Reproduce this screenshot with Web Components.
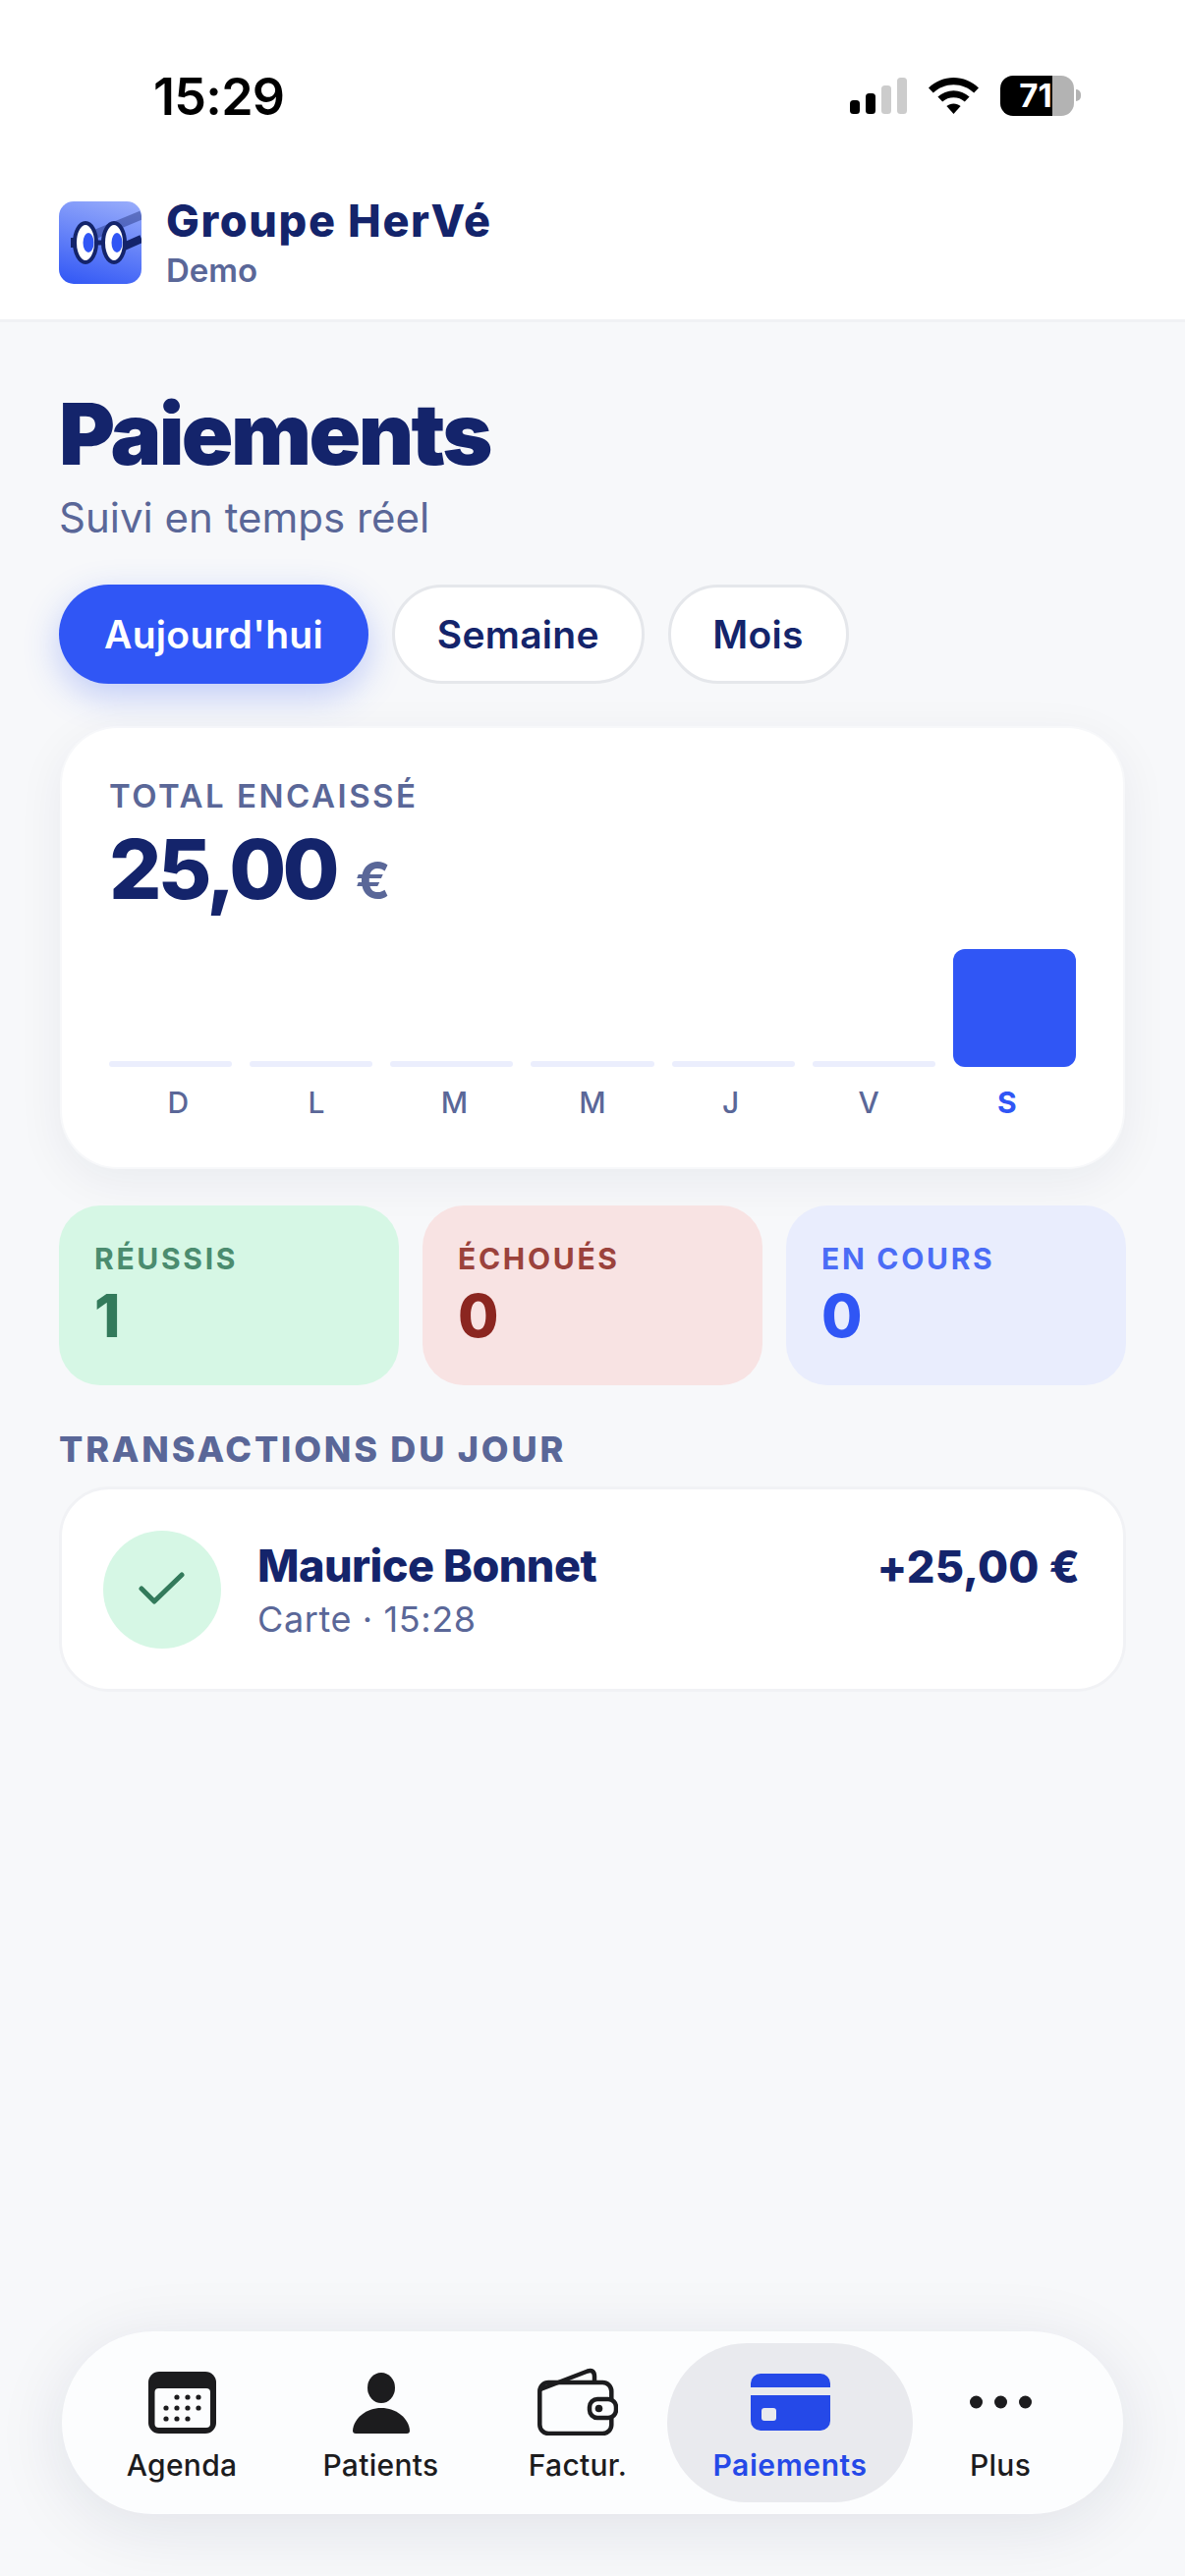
<!DOCTYPE html>
<html lang="fr">
<head>
<meta charset="utf-8">
<title>Paiements</title>
<style>
  html, body { margin: 0; padding: 0; }
  body { width: 1206px; height: 2622px; font-family: Inter, "Liberation Sans", sans-serif; background: #f7f8fa; color: #14246b; overflow: hidden; }
  #app { display: flex; flex-direction: column; height: 2622px; }
</style>
</head>
<body>
<div id="app">
  <status-bar time="15:29" level="71"></status-bar>
  <app-header title="Groupe HerVé" sub="Demo"></app-header>
  <pay-screen>
    <page-title sub="Suivi en temps réel">Paiements</page-title>
    <range-pills>
      <range-pill active>Aujourd'hui</range-pill>
      <range-pill>Semaine</range-pill>
      <range-pill>Mois</range-pill>
    </range-pills>
    <total-card label="TOTAL ENCAISSÉ" amount="25,00" unit="€"></total-card>
    <stat-row>
      <stat-tile tone="ok" label="RÉUSSIS">1</stat-tile>
      <stat-tile tone="bad" label="ÉCHOUÉS">0</stat-tile>
      <stat-tile tone="run" label="EN COURS">0</stat-tile>
    </stat-row>
    <section-label>TRANSACTIONS DU JOUR</section-label>
    <tx-row name="Maurice Bonnet" meta="Carte · 15:28" amount="+25,00 €"></tx-row>
  </pay-screen>
  <tab-bar>
    <tab-item label="Agenda" icon="agenda"></tab-item>
    <tab-item label="Patients" icon="patients"></tab-item>
    <tab-item label="Factur." icon="wallet"></tab-item>
    <tab-item label="Paiements" icon="card" active></tab-item>
    <tab-item label="Plus" icon="more"></tab-item>
  </tab-bar>
</div>

<script>
class StatusBar extends HTMLElement {
  constructor() {
    super();
    this.attachShadow({ mode: "open" });
  }

  connectedCallback() {
    this.shadowRoot.innerHTML = `
    <style>
      :host { display: flex; justify-content: space-between; align-items: center; height: 194px; padding: 0 106px 0 156px; box-sizing: border-box; background: #fff; }
      .time { font-size: 52px; font-weight: 600; line-height: 60px; letter-spacing: -0.7px; color: #000; margin-top: 3px; }
      .right { display: flex; align-items: center; gap: 22px; }
      svg { display: block; }
      .batt { display: flex; align-items: center; gap: 2px; }
      .cell { width: 75px; height: 41px; border-radius: 13px; background: linear-gradient(90deg, #000 71%, #b3b3b3 71%); color: #fff; font-size: 33px; font-weight: 700; line-height: 41px; text-align: center; padding-right: 3px; box-sizing: border-box; }
      .nub { width: 5px; height: 12px; border-radius: 0 6px 6px 0; background: #b3b3b3; }
    </style>
    <div class="time">${this.getAttribute("time")}</div>
    <div class="right">
      <svg width="58" height="37" viewBox="0 0 58 37">
        <rect x="0" y="23" width="10" height="14" rx="3.5" fill="#000"/>
        <rect x="16" y="16" width="10" height="21" rx="3.5" fill="#000"/>
        <rect x="32" y="8" width="10" height="29" rx="3.5" fill="#ccc"/>
        <rect x="48" y="0" width="10" height="37" rx="3.5" fill="#ccc"/>
      </svg>
      <svg width="51" height="37" viewBox="0 0 51 37">
        <path d="M25.5 0C35 0 44 3.8 51 10.5L46.2 15.5C40.6 10.2 33.3 7.2 25.5 7.2S10.4 10.2 4.8 15.5L0 10.5C7 3.8 16 0 25.5 0Z" fill="#000"/>
        <path d="M25.5 13.2C31.6 13.2 37.2 15.5 41.6 19.6L36.8 24.6C33.7 21.8 29.8 20.3 25.5 20.3S17.3 21.8 14.2 24.6L9.4 19.6C13.8 15.5 19.4 13.2 25.5 13.2Z" fill="#000"/>
        <path d="M25.5 26.4C28.2 26.4 30.6 27.3 32.6 29L25.5 37L18.4 29C20.4 27.3 22.8 26.4 25.5 26.4Z" fill="#000"/>
      </svg>
      <div class="batt"><div class="cell">${this.getAttribute("level")}</div><div class="nub"></div></div>
    </div>
    `;
  }
}

class AppHeader extends HTMLElement {
  constructor() {
    super();
    this.attachShadow({ mode: "open" });
  }

  connectedCallback() {
    this.shadowRoot.innerHTML = `
    <style>
      :host { display: flex; align-items: flex-start; gap: 25px; padding: 11px 60px 36px; background: #fff; border-bottom: 3px solid #f0f1f4; }
      .logo { width: 84px; height: 84px; border-radius: 15px; overflow: hidden; flex: none; background: linear-gradient(195deg, #9aaefb 0%, #3056f5 100%); }
      svg { display: block; }
      .text { height: 84px; }
      .name { font-size: 45px; font-weight: 800; line-height: 50px; letter-spacing: 1.65px; color: #14246b; margin-top: -5px; }
      .sub { margin-top: 5px; font-size: 33px; font-weight: 600; line-height: 40px; color: #5a6798; }
    </style>
    <div class="logo">
      <svg width="84" height="84" viewBox="0 0 84 84">
        <path d="M38 33L84 14" stroke="#14246b" stroke-opacity=".4" stroke-width="9" fill="none"/>
        <rect x="12" y="37" width="6" height="10" fill="#14246b"/>
        <path d="M38 42H46" stroke="#14246b" stroke-width="5"/>
        <path d="M66 46L84 38" stroke="#14246b" stroke-width="8" fill="none"/>
        <ellipse cx="27" cy="42" rx="11" ry="20" fill="#fff" stroke="#14246b" stroke-width="4"/>
        <ellipse cx="56" cy="42" rx="11" ry="20" fill="#fff" stroke="#14246b" stroke-width="4"/>
        <ellipse cx="30" cy="42" rx="5.5" ry="10" fill="#3056f5"/>
        <ellipse cx="59" cy="42" rx="5.5" ry="10" fill="#3056f5"/>
      </svg>
    </div>
    <div class="text">
      <div class="name">${this.getAttribute("title")}</div>
      <div class="sub">${this.getAttribute("sub")}</div>
    </div>
    `;
  }
}

class PayScreen extends HTMLElement {
  constructor() {
    super();
    this.attachShadow({ mode: "open" });
    this.shadowRoot.innerHTML = `
    <style>
      :host { display: flex; flex-direction: column; flex: 1; padding: 66px 60px 0; min-height: 0; }
    </style>
    <slot></slot>
    `;
  }
}

class PageTitle extends HTMLElement {
  constructor() {
    super();
    this.attachShadow({ mode: "open" });
  }

  connectedCallback() {
    this.shadowRoot.innerHTML = `
    <style>
      :host { display: block; }
      h1 { margin: 0; font-size: 87px; font-weight: 900; line-height: 96px; letter-spacing: -2.6px; color: #14246b; }
      p { margin: 13px 0 0; font-size: 42px; font-weight: 400; line-height: 48px; color: #5a6798; }
    </style>
    <h1><slot></slot></h1>
    <p>${this.getAttribute("sub")}</p>
    `;
  }
}

class RangePills extends HTMLElement {
  constructor() {
    super();
    this.attachShadow({ mode: "open" });
    this.shadowRoot.innerHTML = `
    <style>
      :host { display: flex; gap: 24px; margin-top: 44px; }
    </style>
    <slot></slot>
    `;
  }
}

class RangePill extends HTMLElement {
  constructor() {
    super();
    this.attachShadow({ mode: "open" });
    this.shadowRoot.innerHTML = `
    <style>
      :host { display: flex; align-items: center; height: 101px; box-sizing: border-box; padding: 0 42.7px; border: 3px solid #e5e7eb; border-radius: 51px; background: #fff; font-size: 39px; font-weight: 600; letter-spacing: 0.3px; color: #14246b; }
      :host([active]) { border: 0; padding: 0 46px; background: #3056f5; color: #fff; box-shadow: 0 12px 36px rgba(48, 86, 245, 0.28); }
    </style>
    <slot></slot>
    `;
  }
}

class TotalCard extends HTMLElement {
  constructor() {
    super();
    this.attachShadow({ mode: "open" });
  }

  connectedCallback() {
    const days = ["D", "L", "M", "M", "J", "V", "S"];
    const bars = days.map((d, i) => `<div class="bar${i === 6 ? " on" : ""}"></div>`).join("");
    const labels = days.map((d, i) => `<div class="day${i === 6 ? " on" : ""}">${d}</div>`).join("");
    this.shadowRoot.innerHTML = `
    <style>
      :host { display: block; margin-top: 42px; padding: 49px 48px 48px; background: #fff; background-clip: padding-box; border: 3px solid transparent; border-radius: 60px; box-shadow: 0 12px 48px rgba(20, 30, 70, 0.06); }
      .label { font-size: 33px; font-weight: 600; line-height: 40px; letter-spacing: 2.5px; color: #5a6798; }
      .total { display: flex; align-items: baseline; gap: 20px; margin-top: 10px; height: 90px; font-size: 84px; font-weight: 800; line-height: 90px; letter-spacing: -3.8px; color: #14246b; }
      .unit { font-size: 52px; font-weight: 700; line-height: 54px; letter-spacing: 0; color: #5a6798; }
      .bars { display: flex; align-items: flex-end; gap: 18px; height: 120px; margin-top: 36px; }
      .bar { flex: 1; height: 6px; border-radius: 3px; background: #ebeefd; }
      .bar.on { height: 120px; border-radius: 12px; background: #3056f5; }
      .days { display: flex; margin-top: 18px; }
      .day { flex: 1; text-align: center; font-size: 30px; font-weight: 500; line-height: 36px; color: #5a6798; }
      .day.on { color: #3056f5; font-weight: 700; }
    </style>
    <div class="label">${this.getAttribute("label")}</div>
    <div class="total"><span>${this.getAttribute("amount")}</span><span class="unit">${this.getAttribute("unit")}</span></div>
    <div class="bars">${bars}</div>
    <div class="days">${labels}</div>
    `;
  }
}

class StatRow extends HTMLElement {
  constructor() {
    super();
    this.attachShadow({ mode: "open" });
    this.shadowRoot.innerHTML = `
    <style>
      :host { display: grid; grid-template-columns: repeat(3, 1fr); gap: 24px; margin-top: 36px; }
    </style>
    <slot></slot>
    `;
  }
}

class StatTile extends HTMLElement {
  constructor() {
    super();
    this.attachShadow({ mode: "open" });
  }

  connectedCallback() {
    this.shadowRoot.innerHTML = `
    <style>
      :host { display: block; padding: 36px 36px 38px; border-radius: 42px; }
      :host([tone="ok"]) { background: #d6f7e5; color: #337a5b; }
      :host([tone="bad"]) { background: #f8e3e3; color: #8b2620; }
      :host([tone="run"]) { background: #e9edfd; color: #3056f5; }
      .label { font-size: 30px; font-weight: 700; line-height: 36px; letter-spacing: 2.7px; opacity: 0.85; }
      .num { margin-top: 7px; font-size: 60px; font-weight: 800; line-height: 66px; }
    </style>
    <div class="label">${this.getAttribute("label")}</div>
    <div class="num"><slot></slot></div>
    `;
  }
}

class SectionLabel extends HTMLElement {
  constructor() {
    super();
    this.attachShadow({ mode: "open" });
    this.shadowRoot.innerHTML = `
    <style>
      :host { display: block; margin: 45px 0 18px; font-size: 36px; font-weight: 800; line-height: 40px; letter-spacing: 2.8px; color: #5a6798; }
    </style>
    <slot></slot>
    `;
  }
}

class TxRow extends HTMLElement {
  constructor() {
    super();
    this.attachShadow({ mode: "open" });
  }

  connectedCallback() {
    this.shadowRoot.innerHTML = `
    <style>
      :host { display: flex; align-items: center; height: 209px; box-sizing: border-box; padding: 0 44px 0 42px; gap: 37px; background: #fff; border: 3px solid #f1f2f5; border-radius: 51px; }
      .dot { width: 120px; height: 120px; flex: none; border-radius: 50%; background: #d6f7e5; display: flex; align-items: center; justify-content: center; }
      .info { flex: 1; padding-top: 3px; }
      .name { font-size: 45px; font-weight: 800; line-height: 50px; letter-spacing: -0.5px; color: #14246b; }
      .meta { margin-top: 8px; font-size: 36px; font-weight: 400; line-height: 42px; letter-spacing: 0.6px; color: #5a6798; }
      .amount { margin-bottom: 46px; font-size: 45px; font-weight: 800; line-height: 50px; letter-spacing: 0.2px; color: #14246b; }
      svg { display: block; }
    </style>
    <div class="dot">
      <svg width="48" height="36" viewBox="0 0 48 36"><path d="M3 17L16 30L44 3" fill="none" stroke="#337a5b" stroke-width="5" stroke-linecap="round" stroke-linejoin="round"/></svg>
    </div>
    <div class="info">
      <div class="name">${this.getAttribute("name")}</div>
      <div class="meta">${this.getAttribute("meta")}</div>
    </div>
    <div class="amount">${this.getAttribute("amount")}</div>
    `;
  }
}

class TabBar extends HTMLElement {
  constructor() {
    super();
    this.attachShadow({ mode: "open" });
    this.shadowRoot.innerHTML = `
    <style>
      :host { display: grid; grid-template-columns: 186px 219px 182px 250px 178px; margin: 0 63px 63px; height: 186px; padding: 12px 36px 12px 29px; box-sizing: border-box; background: #fcfdfe; border-radius: 93px; box-shadow: 0 12px 70px rgba(20, 30, 70, 0.1); }
    </style>
    <slot></slot>
    `;
  }
}

const TAB_ICONS = {
  agenda: `<svg width="69" height="63" viewBox="0 0 69 63">
    <rect width="69" height="63" rx="11" fill="#1c1c1e"/>
    <rect x="6.5" y="17" width="56.5" height="40" rx="4" fill="#fcfdfe"/>
    <g fill="#1c1c1e">
      <circle cx="29" cy="26" r="2.6"/><circle cx="40" cy="26" r="2.6"/><circle cx="51" cy="26" r="2.6"/>
      <circle cx="18" cy="37" r="2.6"/><circle cx="29" cy="37" r="2.6"/><circle cx="40" cy="37" r="2.6"/><circle cx="51" cy="37" r="2.6"/>
      <circle cx="18" cy="48" r="2.6"/><circle cx="29" cy="48" r="2.6"/><circle cx="40" cy="48" r="2.6"/>
    </g>
  </svg>`,
  patients: `<svg width="58" height="63" viewBox="0 0 58 63">
    <ellipse cx="29" cy="16.5" rx="14" ry="15.5" fill="#1c1c1e"/>
    <path d="M3 63Q0 63 0 60C1 47 14 37 29 37C44 37 57 47 58 60Q58 63 55 63Z" fill="#1c1c1e"/>
  </svg>`,
  wallet: `<svg width="82" height="69" viewBox="0 0 82 69" style="margin-top:-1px">
    <path d="M3 22L51 3.5Q58 1.5 58 9V15" fill="none" stroke="#1c1c1e" stroke-width="4.5" stroke-linejoin="round"/>
    <rect x="2.3" y="15" width="73" height="52" rx="9" fill="none" stroke="#1c1c1e" stroke-width="4.5"/>
    <rect x="53" y="32" width="27" height="19" rx="8" fill="#fcfdfe" stroke="#1c1c1e" stroke-width="4.5"/>
    <circle cx="62.5" cy="41.5" r="3.8" fill="#1c1c1e"/>
  </svg>`,
  card: `<svg width="81" height="58" viewBox="0 0 81 58">
    <path d="M10 0H71A10 10 0 0 1 81 10V14H0V10A10 10 0 0 1 10 0Z" fill="#2549e8"/>
    <path d="M0 22H81V48A10 10 0 0 1 71 58H10A10 10 0 0 1 0 48Z" fill="#2549e8"/>
    <rect x="11" y="35" width="15" height="13" rx="3" fill="#e9eaee"/>
  </svg>`,
  more: `<svg width="63" height="14" viewBox="0 0 63 14">
    <circle cx="6.5" cy="7" r="6.5" fill="#1c1c1e"/><circle cx="31.5" cy="7" r="6.5" fill="#1c1c1e"/><circle cx="56.5" cy="7" r="6.5" fill="#1c1c1e"/>
  </svg>`
};

class TabItem extends HTMLElement {
  constructor() {
    super();
    this.attachShadow({ mode: "open" });
  }

  connectedCallback() {
    this.shadowRoot.innerHTML = `
    <style>
      :host { display: flex; flex-direction: column; align-items: center; padding-top: 24px; box-sizing: border-box; border-radius: 81px; color: #1c1c1e; }
      :host([active]) { background: #e9eaee; color: #2549e8; }
      .icon { height: 72px; display: flex; align-items: center; justify-content: center; }
      svg { display: block; }
      .label { margin-top: 10px; font-size: 30px; font-weight: 500; line-height: 36px; letter-spacing: 0.3px; }
      :host([active]) .label { font-weight: 600; letter-spacing: 0.6px; }
    </style>
    <div class="icon">${TAB_ICONS[this.getAttribute("icon")]}</div>
    <div class="label">${this.getAttribute("label")}</div>
    `;
  }
}

customElements.define("status-bar", StatusBar);
customElements.define("app-header", AppHeader);
customElements.define("pay-screen", PayScreen);
customElements.define("page-title", PageTitle);
customElements.define("range-pills", RangePills);
customElements.define("range-pill", RangePill);
customElements.define("total-card", TotalCard);
customElements.define("stat-row", StatRow);
customElements.define("stat-tile", StatTile);
customElements.define("section-label", SectionLabel);
customElements.define("tx-row", TxRow);
customElements.define("tab-bar", TabBar);
customElements.define("tab-item", TabItem);
</script>
</body>
</html>
